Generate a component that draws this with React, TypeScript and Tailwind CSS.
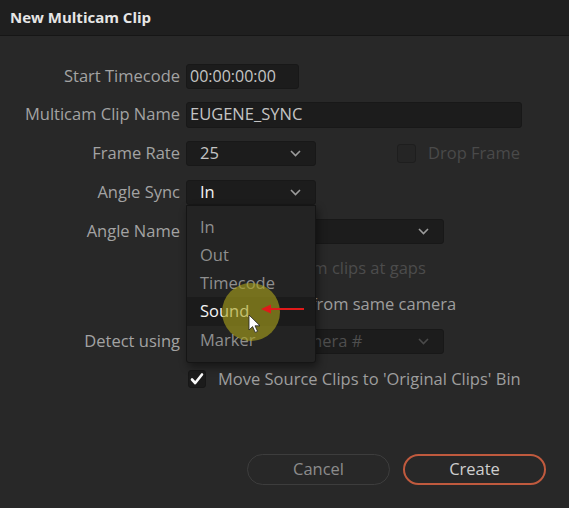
import React from 'react';

const font = { fontFamily: '"Open Sans", "Noto Sans", sans-serif' };

const Chevron: React.FC<{ className?: string }> = ({ className }) => (
  <svg width="11" height="7" viewBox="0 0 11 7" className={className}>
    <path d="M1 1l4.5 4.5L10 1" fill="none" stroke="currentColor" strokeWidth="1.6" />
  </svg>
);

const Row: React.FC<{ label?: string; h: string; children?: React.ReactNode }> = ({ label, h, children }) => (
  <div className={`flex items-center ${h}`}>
    <div className="w-[180px] shrink-0 text-right text-[16.5px] text-[#a3a3a3]">{label}</div>
    <div className="ml-[6px] flex flex-1 items-center">{children}</div>
  </div>
);

const Select: React.FC<{ value: string; w: string; bright?: boolean; dim?: boolean; children?: React.ReactNode }> = ({
  value,
  w,
  bright,
  dim,
  children,
}) => (
  <div
    className={`relative flex h-[25px] ${w} items-center justify-between rounded-[3px] border border-[#181818] bg-[#1c1c1c] pl-[13px] pr-[14px] text-[16.5px]`}
  >
    <span className={bright ? 'text-[#f2f2f2]' : dim ? 'text-[#4e4e4e]' : 'text-[#c4c4c4]'}>{value}</span>
    <Chevron className={dim ? 'text-[#4a4a4a]' : 'text-[#9c9c9c]'} />
    {children}
  </div>
);

const Check: React.FC<{ checked?: boolean; dim?: boolean; label: string }> = ({ checked, dim, label }) => (
  <div className="ml-[2px] flex items-center">
    <div className="flex h-[18px] w-[18px] items-center justify-center rounded-[3px] border border-[#171717] bg-[#1b1b1b]">
      {checked && (
        <svg width="14" height="14" viewBox="0 0 14 14">
          <path d="M2 7.5l3.2 3.5L12 2.5" fill="none" stroke="#fafafa" strokeWidth="2.6" strokeLinecap="round" strokeLinejoin="round" />
        </svg>
      )}
    </div>
    <span className={`ml-[12px] text-[16.5px] ${dim ? 'text-[#4c4c4c]' : 'text-[#9e9e9e]'}`}>{label}</span>
  </div>
);

const items = ['In', 'Out', 'Timecode', 'Sound', 'Marker'];

export default function App() {
  return (
    <div className="relative h-[508px] w-[569px] overflow-hidden bg-[#282828]" style={font}>
      <div className="flex h-[36px] items-center border-b border-[#161616] bg-[#1f1f1f] pl-[10px]">
        <span className="text-[15px] font-bold text-[#e6e6e6]">New Multicam Clip</span>
      </div>

      <div className="pt-[21px]">
        <Row label="Start Timecode" h="h-[38px]">
          <div className="flex h-[25px] w-[113px] items-center rounded-[3px] border border-[#181818] bg-[#1c1c1c] pl-[3px] text-[16px] text-[#c4c4c4]">
            00:00:00:00
          </div>
        </Row>
        <Row label="Multicam Clip Name" h="h-[39px]">
          <div className="flex h-[26px] w-[336px] items-center rounded-[3px] border border-[#181818] bg-[#1c1c1c] pl-[3px] text-[16.5px] text-[#c4c4c4]">
            EUGENE_SYNC
          </div>
        </Row>
        <Row label="Frame Rate" h="h-[39px]">
          <Select value="25" w="w-[130px]" />
          <div className="ml-[81px] flex items-center">
            <div className="h-[19px] w-[19px] rounded-[3px] border border-[#1e1e1e] bg-[#252525]" />
            <span className="ml-[12px] text-[16.5px] text-[#4a4a4a]">Drop Frame</span>
          </div>
        </Row>
        <Row label="Angle Sync" h="h-[39px]">
          <Select value="In" w="w-[130px]" bright>
            <div className="absolute left-[-1px] top-[24px] z-20 h-[158px] w-[130px] rounded-b-[3px] border border-[#151515] bg-[#232323] pt-[7px] shadow-[2px_4px_8px_rgba(0,0,0,0.45)]">
              {items.map((it, i) => (
                <div
                  key={it}
                  className={`flex items-center pl-[13px] text-[16.5px] ${i >= 3 ? 'h-[29px]' : 'h-[28px]'} ${
                    it === 'Sound' ? 'bg-[#1b1b1b] text-[#f4f4f4]' : 'text-[#8f8f8f]'
                  }`}
                >
                  {it}
                </div>
              ))}
            </div>
          </Select>
        </Row>
        <Row label="Angle Name" h="h-[38px]">
          <Select value="Sequential" w="w-[258px]" />
        </Row>
        <Row h="h-[36px]">
          <Check dim label="Split multicam clips at gaps" />
        </Row>
        <Row h="h-[36px]">
          <Check label="Detect clips from same camera" />
        </Row>
        <Row label="Detect using" h="h-[38px]">
          <Select value="Metadata - Camera #" w="w-[258px]" dim />
        </Row>
        <Row h="h-[38px]">
          <Check checked label="Move Source Clips to 'Original Clips' Bin" />
        </Row>
      </div>

      <div className="mt-[56px] flex justify-end gap-[13px] pr-[23px]">
        <button className="h-[31px] w-[143px] rounded-full border border-[#3d3d3d] text-[16.5px] text-[#8c8c8c]">Cancel</button>
        <button className="h-[31px] w-[143px] rounded-full border-2 border-[#c05a3e] text-[16.5px] text-[#cfcfcf]">Create</button>
      </div>

      {/* cursor highlight, pointer and annotation arrow */}
      <div className="pointer-events-none absolute left-[222px] top-[283px] z-30 h-[58px] w-[58px] rounded-full bg-[rgba(170,162,28,0.62)]" />
      <svg className="pointer-events-none absolute left-[248px] top-[314px] z-40" width="14" height="20" viewBox="0 0 14 20">
        <path d="M1 1v15l3.6-3.4 2.6 5.8 2.4-1-2.6-5.6H12z" fill="#ffffff" stroke="#222" strokeWidth="0.8" />
      </svg>
      <svg className="pointer-events-none absolute left-[260px] top-[303px] z-40" width="46" height="12" viewBox="0 0 46 12">
        <path d="M10 6h34" stroke="#e01a1a" strokeWidth="2.2" />
        <path d="M1 6l10-4.5v9z" fill="#e01a1a" />
      </svg>
    </div>
  );
}
